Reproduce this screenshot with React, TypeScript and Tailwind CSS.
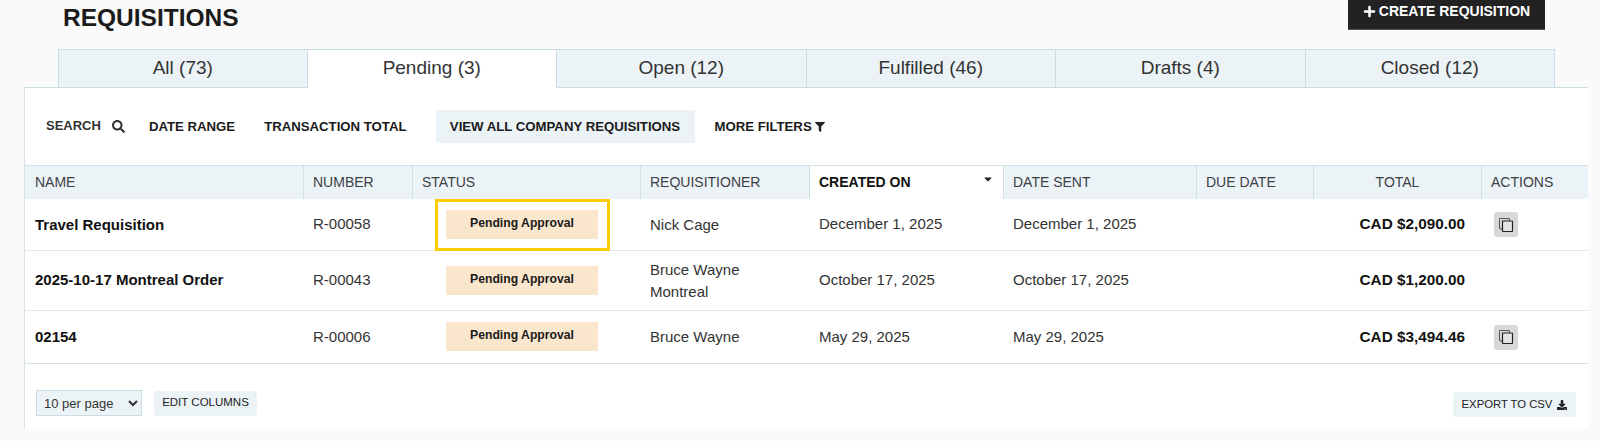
import React from 'react';
import { FaDownload, FaFilter, FaPlus, FaSearch, FaCaretDown } from 'react-icons/fa';

const tabs = ['All (73)', 'Pending (3)', 'Open (12)', 'Fulfilled (46)', 'Drafts (4)', 'Closed (12)'];

const columnGrid = 'grid grid-cols-[279px_109px_228px_169px_194px_193px_117px_168px_106px]';

const rows = [
  { name: 'Travel Requisition', number: 'R-00058', who: 'Nick Cage', created: 'December 1, 2025', sent: 'December 1, 2025', total: 'CAD $2,090.00', copy: true, height: 'h-[52px]', mark: true },
  { name: '2025-10-17 Montreal Order', number: 'R-00043', who: 'Bruce Wayne Montreal', created: 'October 17, 2025', sent: 'October 17, 2025', total: 'CAD $1,200.00', copy: false, height: 'h-[60px]', mark: false },
  { name: '02154', number: 'R-00006', who: 'Bruce Wayne', created: 'May 29, 2025', sent: 'May 29, 2025', total: 'CAD $3,494.46', copy: true, height: 'h-[53px]', mark: false },
];

const CopyIcon = () => (
  <svg width="16" height="16" viewBox="0 0 16 16" fill="none">
    <rect x="1.5" y="1.5" width="10" height="10.5" rx="0.5" fill="#d6d6d6" stroke="#555" strokeWidth="1" />
    <rect x="4.5" y="4" width="10" height="10.5" rx="0.5" fill="#e4e4e4" stroke="#222" strokeWidth="1.2" />
  </svg>
);

const HeaderCell = ({ label, active, center, first }: { label: string; active?: boolean; center?: boolean; first?: boolean }) => (
  <div
    className={`flex items-center border-r border-[#cfe0e6] text-[14px] last:border-r-0 ${
      center ? 'justify-center' : first ? 'pl-[10px]' : 'pl-[9px]'
    } ${active ? 'relative bg-white font-bold text-[#111]' : 'text-[#3c4146]'}`}
  >
    {label}
    {active && <FaCaretDown className="absolute right-[9px] top-[7px] text-[12px] text-[#222]" />}
  </div>
);

export default function App() {
  return (
    <div className="h-[441px] w-[1600px] overflow-hidden bg-[#fafafa] font-['Liberation_Sans',Arial,sans-serif]">
      {/* Title */}
      <div className="flex h-[49px] items-start justify-between pl-[63px] pr-[55px]">
        <h1 className="pt-[4px] text-[24.5px] font-bold leading-[28px] text-[#1b1b1b]">REQUISITIONS</h1>
        <button className="flex h-[30px] w-[197px] items-center justify-center gap-[3px] border-b border-[#555] bg-[#222] pb-[6px] text-[14px] font-bold text-white">
          <FaPlus className="text-[13px]" />
          CREATE REQUISITION
        </button>
      </div>

      {/* Tabs */}
      <div className="relative z-10 ml-[58px] grid h-[39px] w-[1497px] grid-cols-6">
        {tabs.map((tab, i) => (
          <div
            key={tab}
            className={`flex items-center justify-center border-t border-r border-b border-[#c9dde3] text-[19px] text-[#333] ${
              i === 0 ? 'border-l' : ''
            } ${i === 1 ? 'border-b-white bg-white' : 'bg-[#ecf3f7]'}`}
          >
            {tab}
          </div>
        ))}
      </div>

      {/* Panel */}
      <div className="-mt-px ml-[24px] h-[342px] w-[1564px] border-l border-[#d6e4e9] bg-white">
        <div className="h-[78px] border-t border-[#c9dde3]">
          <div className="flex items-center pl-[21px] pt-[22px] text-[13.2px] font-bold text-[#1a1a1a]">
            <span className="-mt-[2px] text-[13px] text-[#333]">SEARCH</span>
            <FaSearch className="ml-[11px] text-[13px] text-[#333]" />
            <span className="ml-[24px]">DATE RANGE</span>
            <span className="ml-[29px]">TRANSACTION TOTAL</span>
            <span className="ml-[29px] flex h-[33px] w-[259px] items-center justify-center bg-[#ecf3f7]">VIEW ALL COMPANY REQUISITIONS</span>
            <span className="ml-[20px]">MORE FILTERS</span>
            <FaFilter className="ml-[3px] text-[10px] text-[#222]" />
          </div>
        </div>

        {/* Table */}
        <div className={`${columnGrid} h-[34px] border-t border-[#d5e3e8] bg-[#ecf3f7]`}>
          <HeaderCell label="NAME" first />
          <HeaderCell label="NUMBER" />
          <HeaderCell label="STATUS" />
          <HeaderCell label="REQUISITIONER" />
          <HeaderCell label="CREATED ON" active />
          <HeaderCell label="DATE SENT" />
          <HeaderCell label="DUE DATE" />
          <HeaderCell label="TOTAL" center />
          <HeaderCell label="ACTIONS" />
        </div>

        {rows.map((row, i) => (
          <div
            key={row.number}
            className={`${columnGrid} ${row.height} items-center border-b text-[15px] text-[#333] ${
              i === rows.length - 1 ? 'border-[#d5e0e5]' : 'border-[#e4e9ec]'
            }`}
          >
            <div className={`pl-[10px] font-bold text-[#111] ${i === 0 ? 'pt-[1px]' : ''}`}>{row.name}</div>
            <div className="pl-[9px]">{row.number}</div>
            <div className={`relative flex justify-center pr-[10px] ${i === 2 ? '-mt-px' : ''}`}>
              <span className="flex h-[29px] w-[152px] items-center justify-center bg-[#fae6cc] pb-[2px] text-[12.2px] font-bold text-[#1a1a1a]">Pending Approval</span>
              {row.mark && <div className="absolute left-[22px] top-[-11px] h-[52px] w-[175px] border-[3px] border-[#fdcd07]" />}
            </div>
            <div className="pl-[9px] pr-[10px] leading-[22px]">{row.who}</div>
            <div className="pl-[9px]">{row.created}</div>
            <div className="pl-[9px]">{row.sent}</div>
            <div />
            <div className="pr-[17px] text-right text-[15.3px] font-bold text-[#111]">{row.total}</div>
            <div className="pl-[12px]">
              {row.copy && (
                <button className="flex h-[25px] w-[24px] items-center justify-center rounded-[3px] bg-[#d8d8d8]">
                  <CopyIcon />
                </button>
              )}
            </div>
          </div>
        ))}

        {/* Footer */}
        <div className="flex items-start justify-between pl-[11px] pr-[12px] pt-[26px]">
          <div className="flex items-center gap-[12px]">
            <select className="h-[26px] w-[106px] border border-[#c9dde3] bg-[#ecf3f7] pl-[3px] text-[13px] text-[#333]" defaultValue="10">
              <option value="10">10 per page</option>
            </select>
            <button className="h-[25px] w-[103px] rounded-[3px] bg-[#ecf3f7] text-[11.5px] font-medium text-[#222]">EDIT COLUMNS</button>
          </div>
          <button className="mt-[2px] flex h-[25px] w-[123px] items-center justify-center gap-[5px] rounded-[3px] bg-[#ecf3f7] text-[11.3px] text-[#222]">
            EXPORT TO CSV
            <FaDownload className="text-[10px]" />
          </button>
        </div>
      </div>
    </div>
  );
}
